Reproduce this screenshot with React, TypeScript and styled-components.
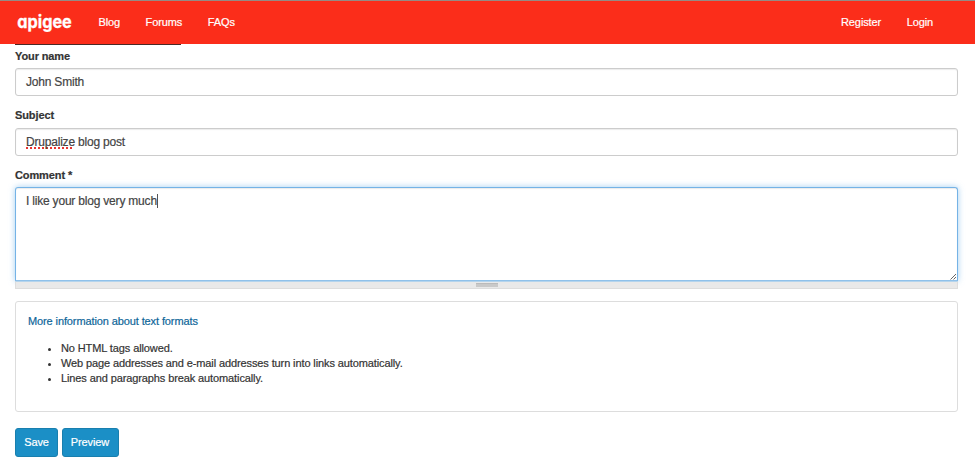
import React from "react";
import styled, { createGlobalStyle, css } from "styled-components";

const Global = createGlobalStyle`
  * { box-sizing: border-box; }
  body {
    margin: 0;
    background: #fff;
    color: #333;
    font: 11px/15px "Liberation Sans", Arial, sans-serif;
    letter-spacing: -0.11px;
    -webkit-text-stroke-width: 0.2px;
    overflow: hidden;
  }
`;

const Page = styled.div`
  height: 471px;
  overflow: hidden;
`;

const Navbar = styled.header`
  display: flex;
  align-items: center;
  height: 44px;
  padding: 0 42px 1px 17px;
  border-top: 1px solid #958b85;
  background: #fb2d1a;
  color: #fff;
`;

const Logo = styled.svg`
  display: block;
  width: 56px;
  height: 30px;
  margin-right: 25.5px;
  overflow: visible;
`;

const LogoText = styled.text`
  font: 700 17.5px Inter, "Open Sans", sans-serif;
  font-feature-settings: "cv11";
  letter-spacing: 0;
  fill: #fff;
  stroke: #fff;
  stroke-width: 0.3px;
`;

const NavGroup = styled.nav<{ $end?: boolean }>`
  display: flex;
  gap: 25.5px;
  ${(p) => p.$end && css`margin-left: auto;`}
`;

const NavLink = styled.a`
  color: #fff;
`;

const Form = styled.form`
  padding: 0 17px 0 15px;
`;

const Rule = styled.div`
  width: 166px;
  height: 1px;
  background: #4a2926;
`;

const Field = styled.div`
  height: 59.5px;
`;

const Label = styled.label`
  display: block;
  height: 23px;
  padding-top: 3.5px;
  font-weight: 700;
`;

const inputText = css`
  padding: 0 10px;
  color: #444;
  font-size: 12px;
  line-height: 16px;
  letter-spacing: -0.2px;
`;

const Input = styled.div`
  ${inputText}
  display: flex;
  align-items: center;
  height: 28px;
  border: 1px solid #ccc;
  border-radius: 3px;
  box-shadow: inset 0 1px 1px rgba(0, 0, 0, 0.08);
  white-space: pre;
`;

const Misspelled = styled.span`
  text-decoration: underline dotted #e8332f 1.5px;
  text-decoration-skip-ink: none;
  text-underline-offset: 2px;
`;

const TextArea = styled.div`
  ${inputText}
  display: flex;
  align-items: flex-start;
  justify-content: space-between;
  height: 94px;
  padding: 5px 0 0 10px;
  border: 1px solid #75b3e6;
  border-bottom-color: #8fc1ea;
  border-radius: 3px 3px 0 0;
  box-shadow: inset 0 1px 1px rgba(0, 0, 0, 0.08), 0 0 6px rgba(102, 175, 233, 0.6);
`;

const Caret = styled.span`
  display: inline-block;
  width: 1px;
  height: 14px;
  background: #555;
  vertical-align: -3px;
`;

const ResizeCorner = styled.svg`
  align-self: flex-end;
  width: 7px;
  height: 7px;
`;

const Grippie = styled.div`
  display: flex;
  justify-content: center;
  height: 8px;
  border: 1px solid #ddd;
  border-top-color: #b5d4ec;
  background: #e9e9e9;
  position: relative;
`;

const Grip = styled.span`
  width: 22px;
  height: 4px;
  margin-top: 1px;
  border-top: 1px solid #bbb;
  background: #c9c9c9;
`;

const Panel = styled.section`
  height: 111px;
  margin-top: 12px;
  padding: 12px 12px;
  border: 1px solid #ddd;
  border-radius: 3px;
`;

const HelpLink = styled.a`
  display: block;
  color: #0e6699;
`;

const Tips = styled.ul`
  margin: 12px 0 0;
  padding-left: 33px;
`;

const Actions = styled.div`
  display: flex;
  gap: 3.5px;
  margin-top: 16px;
`;

const Button = styled.button<{ $width: number }>`
  width: ${(p) => p.$width}px;
  height: 29px;
  padding: 0 0 1px;
  border: 1px solid #197fae;
  border-radius: 3px;
  background: #1b8fc6;
  color: #fff;
  font: 11px/15px "Liberation Sans", Arial, sans-serif;
  letter-spacing: -0.11px;
`;

export default function App() {
  return (
    <Page>
      <Global />
      <Navbar>
        <Logo viewBox="0 0 56 30" role="img" aria-label="apigee">
          <LogoText x="0.3" y="20.6" textLength="54.5" lengthAdjust="spacingAndGlyphs">
            apigee
          </LogoText>
        </Logo>
        <NavGroup>
          <NavLink>Blog</NavLink>
          <NavLink>Forums</NavLink>
          <NavLink>FAQs</NavLink>
        </NavGroup>
        <NavGroup $end>
          <NavLink>Register</NavLink>
          <NavLink>Login</NavLink>
        </NavGroup>
      </Navbar>
      <Form>
        <Rule />
        <Field>
          <Label>Your name</Label>
          <Input>John Smith</Input>
        </Field>
        <Field>
          <Label>Subject</Label>
          <Input>
            <Misspelled>Drupalize</Misspelled> blog post
          </Input>
        </Field>
        <Label>Comment *</Label>
        <TextArea>
          <span>
            I like your blog very much
            <Caret />
          </span>
          <ResizeCorner viewBox="0 0 7 7">
            <path d="M0.5 6.5L6 1M3.5 6.5L6 4" fill="none" stroke="#666" />
          </ResizeCorner>
        </TextArea>
        <Grippie>
          <Grip />
        </Grippie>
        <Panel>
          <HelpLink>More information about text formats</HelpLink>
          <Tips>
            <li>No HTML tags allowed.</li>
            <li>Web page addresses and e-mail addresses turn into links automatically.</li>
            <li>Lines and paragraphs break automatically.</li>
          </Tips>
        </Panel>
        <Actions>
          <Button type="button" $width={43}>Save</Button>
          <Button type="button" $width={57}>Preview</Button>
        </Actions>
      </Form>
    </Page>
  );
}
